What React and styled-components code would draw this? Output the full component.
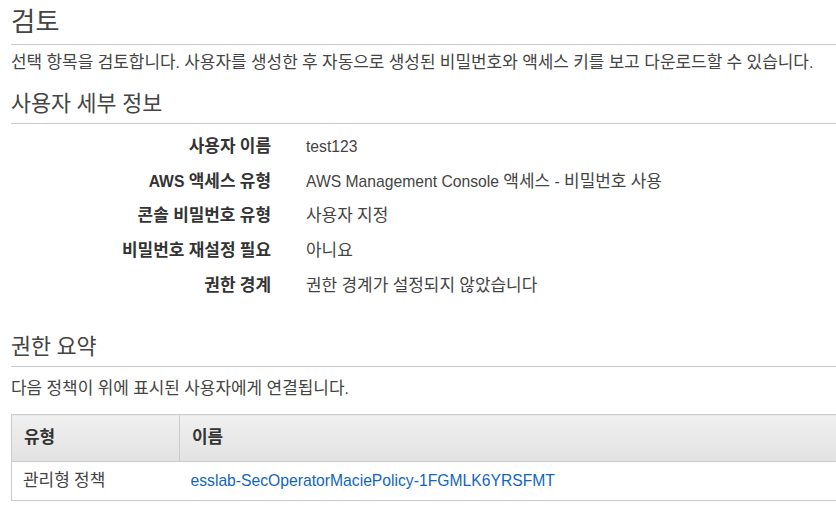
import React from "react";
import styled, { createGlobalStyle } from "styled-components";

const Global = createGlobalStyle`
  html, body { margin: 0; padding: 0; background: #fff; overflow: hidden; }
  body {
    font-family: "Liberation Sans", Arial, "Noto Sans CJK KR", sans-serif;
    color: #444;
    font-size: 15.7px;
  }
`;

const Hangul = styled.span`
  font-family: "Noto Sans CJK KR", sans-serif;
  font-size: ${(p) => p.$scale || 1.08}em;
  line-height: 0;
`;

const ko = (text, scale) =>
  text.split(/([\uAC00-\uD7A3]+)/).map((s, i) =>
    i % 2 ? (
      <Hangul key={i} $scale={scale}>
        {s}
      </Hangul>
    ) : (
      s
    )
  );

const Page = styled.div`
  width: 860px;
  padding-left: 11px;
  box-sizing: border-box;
`;

const Title = styled.h1`
  margin: 0;
  padding: 5px 0 5px;
  font-size: 26.4px;
  line-height: 34px;
  font-weight: normal;
  color: #444;
  border-bottom: 1px solid #ccc;
`;

const Lead = styled.p`
  margin: ${(p) => p.$top || 0}px 0 0;
  line-height: 20px;
  color: #444;
`;

const SectionHeading = styled.h2`
  margin: ${(p) => p.$top}px 0 0;
  padding: 0 0 7px;
  font-size: 19.8px;
  line-height: 24px;
  font-weight: normal;
  color: #444;
  border-bottom: 1px solid #ccc;
`;

const Details = styled.dl`
  margin: 5.5px 0 0;
  display: grid;
  grid-template-columns: 260px 1fr;
  grid-auto-rows: 34.75px;
  column-gap: 35px;
  align-items: center;
`;

const Label = styled.dt`
  text-align: right;
  font-weight: bold;
  line-height: 20px;
  color: #333;
`;

const Value = styled.dd`
  margin: 0;
  line-height: 20px;
  color: #444;
`;

const Table = styled.table`
  margin-top: 15px;
  width: 100%;
  border-collapse: collapse;
  border-top: 1px solid #ccc;
  border-left: 1px solid #ccc;
`;

const Th = styled.th`
  height: 47px;
  padding: 0 12px;
  text-align: left;
  font-weight: bold;
  line-height: 20px;
  color: #333;
  background: linear-gradient(#f0f0f0, #e2e2e2);
  border-bottom: 1px solid #ccc;
  border-right: 1px solid #ccc;
  width: ${(p) => (p.$w ? `${p.$w}px` : "auto")};
  box-sizing: border-box;
`;

const Td = styled.td`
  height: 39px;
  padding: 0 11px;
  color: #444;
  border-bottom: 1px solid #ccc;
  line-height: 20px;
  box-sizing: border-box;
`;

const Link = styled.a`
  color: #1166bb;
  text-decoration: none;
`;

const TableRow = styled.tr``;

const details = [
  ["사용자 이름", "test123"],
  ["AWS 액세스 유형", "AWS Management Console 액세스 - 비밀번호 사용"],
  ["콘솔 비밀번호 유형", "사용자 지정"],
  ["비밀번호 재설정 필요", "아니요"],
  ["권한 경계", "권한 경계가 설정되지 않았습니다"],
];

export default function App() {
  return (
    <>
      <Global />
      <Page>
        <Title>{ko("검토", 1)}</Title>
        <Lead $top={8}>
          {ko(
            "선택 항목을 검토합니다. 사용자를 생성한 후 자동으로 생성된 비밀번호와 액세스 키를 보고 다운로드할 수 있습니다."
          )}
        </Lead>
        <SectionHeading $top={19}>{ko("사용자 세부 정보", 1.1)}</SectionHeading>
        <Details>
          {details.map(([k, v]) => (
            <React.Fragment key={k}>
              <Label>{ko(k)}</Label>
              <Value>{ko(v)}</Value>
            </React.Fragment>
          ))}
        </Details>
        <SectionHeading $top={32}>{ko("권한 요약", 1.1)}</SectionHeading>
        <Lead $top={12}>{ko("다음 정책이 위에 표시된 사용자에게 연결됩니다.")}</Lead>
        <Table>
          <thead>
            <TableRow>
              <Th $w={168}>{ko("유형")}</Th>
              <Th>{ko("이름")}</Th>
            </TableRow>
          </thead>
          <tbody>
            <TableRow>
              <Td>{ko("관리형 정책")}</Td>
              <Td>
                <Link href="#">esslab-SecOperatorMaciePolicy-1FGMLK6YRSFMT</Link>
              </Td>
            </TableRow>
          </tbody>
        </Table>
      </Page>
    </>
  );
}
